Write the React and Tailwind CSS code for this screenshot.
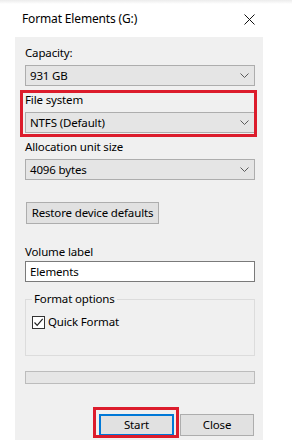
import React from "react";

const Chevron = () => (
  <svg width="9" height="5" viewBox="0 0 9 5" className="shrink-0">
    <path d="M0.5 0.5 L4.5 4.5 L8.5 0.5" fill="none" stroke="#5a5a5a" strokeWidth="1" />
  </svg>
);

const Select = ({ value }) => (
  <div className="w-[230px] h-[21px] bg-[#e5e5e5] border border-[#adadad] flex items-center justify-between pl-[4px] pr-[5px]">
    <span className="leading-none">{value}</span>
    <Chevron />
  </div>
);

export default function App() {
  return (
    <div
      className="w-[292px] h-[440px] bg-white relative overflow-hidden text-[11.5px] tracking-[-0.15px] text-black"
      style={{ fontFamily: '"Segoe UI", "Noto Sans", "Open Sans", sans-serif' }}
    >
      <div className="h-[4px] bg-gradient-to-b from-[#ececec] to-white" />
      <div className="h-[33px] flex items-center justify-between pl-[22px] pr-[37px] pb-[3px]">
        <span className="text-[12px]">Format Elements (G:)</span>
        <svg width="11" height="11" viewBox="0 0 11 11">
          <path d="M0.5 0.5 L10.5 10.5 M10.5 0.5 L0.5 10.5" stroke="#111" strokeWidth="1" />
        </svg>
      </div>
      <div className="ml-[15px] w-[248px] h-[403px] bg-[#f0f0f0] pl-[10px] pt-[8px] flex flex-col items-start">
        <div className="h-[16px] leading-[16px]">Capacity:</div>
        <div className="mt-[4px]"><Select value="931 GB" /></div>
        <div className="h-[16px] leading-[16px] mt-[6px]">File system</div>
        <div className="mt-[4px]"><Select value="NTFS (Default)" /></div>
        <div className="h-[16px] leading-[16px] mt-[6px]">Allocation unit size</div>
        <div className="mt-[4px]"><Select value="4096 bytes" /></div>
        <div className="mt-[22px] ml-[1px] h-[22px] w-[133px] bg-[#e1e1e1] border border-[#adadad] flex items-center justify-center">
          Restore device defaults
        </div>
        <div className="h-[16px] leading-[16px] mt-[20px]">Volume label</div>
        <div className="mt-[1px] w-[230px] h-[21px] bg-white border border-[#7a7a7a] flex items-center pl-[4px]">
          Elements
        </div>
        <fieldset className="mt-[9px] w-[230px] h-[65px] border border-[#dcdcdc] pl-[6px] m-0">
          <legend className="px-[2px] h-[16px] leading-[16px]">Format options</legend>
          <div className="flex items-center gap-[3px] mt-[7px]">
            <div className="w-[13px] h-[13px] border border-[#333] bg-white flex items-center justify-center">
              <svg width="11" height="11" viewBox="0 0 11 11">
                <path d="M1.5 5.5 L4.2 8.3 L9.7 1.8" fill="none" stroke="#222" strokeWidth="1.2" />
              </svg>
            </div>
            <span className="leading-[16px]">Quick Format</span>
          </div>
        </fieldset>
        <div className="mt-[15px] w-[230px] h-[13px] bg-[#e6e6e6] border border-[#bcbcbc]" />
        <div className="mt-[30px] ml-[74px] flex gap-[6px]">
          <div className="w-[75px] h-[22px] bg-[#e1e1e1] border-2 border-[#0078d7] flex items-center justify-center">
            Start
          </div>
          <div className="w-[74px] h-[22px] bg-[#e1e1e1] border border-[#adadad] flex items-center justify-center">
            Close
          </div>
        </div>
      </div>
      <div className="absolute left-[20px] top-[90px] w-[237px] h-[47px] border-[3px] border-[#dc1c2c] pointer-events-none" />
      <div className="absolute left-[93px] top-[407px] w-[86px] h-[31px] border-[3px] border-[#dc1c2c] pointer-events-none" />
    </div>
  );
}
